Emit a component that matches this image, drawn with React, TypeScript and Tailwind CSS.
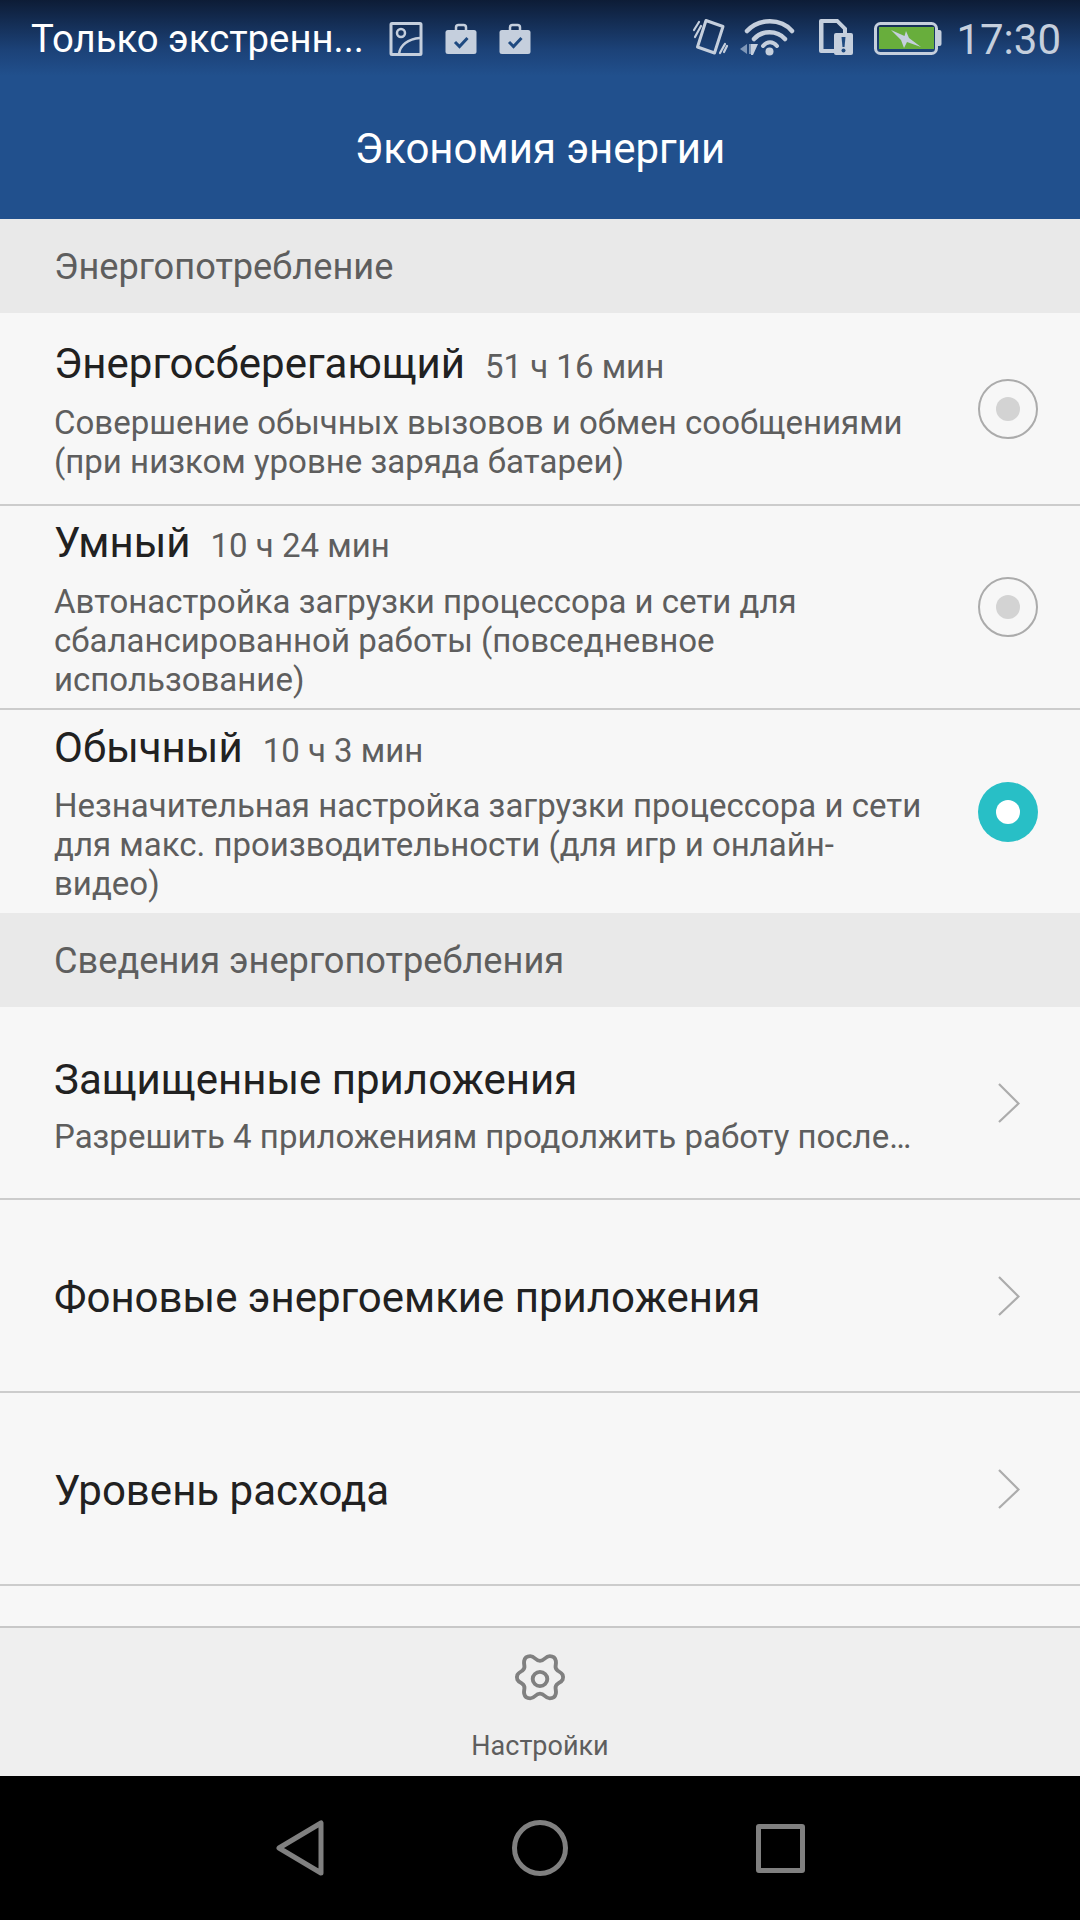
const font = { fontFamily: 'Roboto, "Noto Sans", sans-serif' };

function ImageIcon() {
  return (
    <svg width="34" height="36" viewBox="0 0 34 36" fill="none" stroke="#c5cfdd" strokeWidth="3">
      <rect x="2" y="2.5" width="30" height="31" rx="1" />
      <circle cx="12" cy="12" r="4" strokeWidth="2.5" />
      <path d="M10 33c1-9 9-15 21-16" strokeWidth="2.5" />
    </svg>
  );
}

function BriefcaseIcon() {
  return (
    <svg width="32" height="32" viewBox="0 0 32 32">
      <path d="M11 7V4.500C11 3 12 2 13.500 2h5C20 2 21 3 21 4.500V7" fill="none" stroke="#c5cfdd" strokeWidth="2.500" />
      <rect x="0.500" y="7" width="31" height="24" rx="2.500" fill="#c5cfdd" />
      <path d="M10 19l4.500 4.500L22.500 15" fill="none" stroke="#1f4a80" strokeWidth="3" />
    </svg>
  );
}

function VibrateIcon() {
  return (
    <svg width="38" height="42" viewBox="2 8 38 42" fill="none" stroke="#c5cfdd">
      <path d="M17 10.500L34 16.500L25.500 43L8.500 37z" strokeWidth="3" strokeLinejoin="round" />
      <path d="M5 20L10 12M6 27L12 16M31 43L36 34M35 42L38 36" strokeWidth="2.200" strokeLinecap="round" />
    </svg>
  );
}

function WifiIcon() {
  return (
    <svg width="58" height="42" viewBox="50 8 58 42" fill="none" stroke="#c5cfdd" strokeLinecap="round">
      <path d="M58 21C70 8 92 8 103 21" strokeWidth="4.500" />
      <path d="M65 29C73 20 88 20 96 29" strokeWidth="4.500" />
      <path d="M74 36C78 31 84 31 88 36" strokeWidth="4" />
      <circle cx="80.500" cy="41.500" r="4" fill="#c5cfdd" stroke="none" />
      <path d="M51 39l7-5v10z" fill="#7f97b8" stroke="none" />
      <path d="M60 34h2.500v10H60z" fill="#7f97b8" stroke="none" />
      <path d="M62 34h7l-5 11h-2z" fill="#c5cfdd" stroke="none" />
    </svg>
  );
}

function SimAlertIcon() {
  return (
    <svg width="38" height="42" viewBox="3 8 38 42">
      <path d="M5 11Q5 9 7 9H24L33 18V23H29V19.500L22.500 13H9.500V39H20V43H7Q5 43 5 41z" fill="#c5cfdd" />
      <rect x="20" y="23" width="19" height="22" rx="2" fill="#c5cfdd" />
      <path d="M27.500 27H31.500L30.500 37H28.500z" fill="#1f4a80" />
      <circle cx="29.500" cy="40.500" r="2" fill="#1f4a80" />
    </svg>
  );
}

function BatteryIcon() {
  return (
    <svg width="72" height="42" viewBox="58 8 72 42">
      <rect x="61.500" y="13.500" width="61" height="30" rx="5" fill="none" stroke="#c5cfdd" strokeWidth="3" />
      <rect x="65" y="17" width="55" height="22" fill="#68ae3c" />
      <path d="M124 20h1.500a2 2 0 0 1 2 2v12a2 2 0 0 1-2 2H124z" fill="#c5cfdd" />
      <path d="M77 20L90.500 26L92 21L95 28L107 37L93 32L90 38L87 30z" fill="#c5cfdd" />
    </svg>
  );
}

function SettingsIcon() {
  return (
    <svg width="56" height="54" viewBox="0 0 46 46" preserveAspectRatio="none" fill="none" stroke="#808080" strokeWidth="3.200" strokeLinejoin="round">
      <path d="M15 3.500c2 0 3 1 4 2s2.500 2 4 2 3-1 4-2 2-2 4-2c2.500 0 4.500 1.500 5 4 .3 2 0 3-.2 4.500-.2 1.500.5 3 1.800 4 1.500 1 3 1.500 4 3.500.6 1.500.6 2.500 0 4-1 2-2.500 2.500-4 3.500-1.300 1-2 2.500-1.800 4 .2 1.500.5 2.500.2 4.500-.5 2.500-2.500 4-5 4-2 0-3-1-4-2s-2.500-2-4-2-3 1-4 2-2 2-4 2c-2.500 0-4.500-1.500-5-4-.3-2 0-3 .2-4.500.2-1.500-.5-3-1.800-4-1.500-1-3-1.500-4-3.500-.6-1.500-.6-2.500 0-4 1-2 2.500-2.500 4-3.500 1.300-1 2-2.500 1.800-4-.2-1.500-.5-2.500-.2-4.500.5-2.500 2.500-4 5-4z" />
      <circle cx="23" cy="23" r="6" />
    </svg>
  );
}

function BackIcon() {
  return (
    <svg width="48" height="56" viewBox="0 0 48 56" fill="none" stroke="#808080" strokeWidth="5" strokeLinejoin="round">
      <path d="M3 28L45 3v50z" />
    </svg>
  );
}

function Chevron() {
  return (
    <svg width="22" height="40" viewBox="0 0 22 40" fill="none" stroke="#acacac" strokeWidth="2.200" className="shrink-0">
      <path d="M1 1l19.500 19.500L1 39" />
    </svg>
  );
}

function Radio({ active }: { active?: boolean }) {
  if (active) {
    return (
      <div className="flex h-[60px] w-[60px] shrink-0 items-center justify-center rounded-full bg-[#28bfc6]">
        <div className="h-6 w-6 rounded-full bg-white" />
      </div>
    );
  }
  return (
    <div className="flex h-[60px] w-[60px] shrink-0 items-center justify-center rounded-full border-2 border-[#ababab]">
      <div className="h-6 w-6 rounded-full bg-[#d3d3d3]" />
    </div>
  );
}

function SectionHeader({ title }: { title: string }) {
  return (
    <div className="flex h-[94px] items-center bg-[#e9e9e9] pl-[54px] pt-[2px] text-[36.2px] text-[#5e5e5e]">
      {title}
    </div>
  );
}

const modes = [
  {
    name: 'Энергосберегающий',
    time: '51 ч 16 мин',
    lines: ['Совершение обычных вызовов и обмен сообщениями', '(при низком уровне заряда батареи)'],
    height: 'h-[193px]',
    border: true,
  },
  {
    name: 'Умный',
    time: '10 ч 24 мин',
    lines: ['Автонастройка загрузки процессора и сети для', 'сбалансированной работы (повседневное', 'использование)'],
    height: 'h-[204px]',
    border: true,
  },
  {
    name: 'Обычный',
    time: '10 ч 3 мин',
    lines: ['Незначительная настройка загрузки процессора и сети', 'для макс. производительности (для игр и онлайн-', 'видео)'],
    height: 'h-[203px]',
    border: false,
    active: true,
  },
];

function LinkRow({ title, subtitle }: { title: string; subtitle?: string }) {
  return (
    <div className="flex h-[193px] items-center justify-between border-b-2 border-[#cccccc] pl-[54px] pr-[60px]">
      <div className={`min-w-0 ${subtitle ? 'pt-[6px]' : 'pt-[4px]'}`}>
        <div className="text-[42px] leading-[48px] text-[#212121]">{title}</div>
        {subtitle && (
          <div className="mt-[13px] text-[33px] leading-[39px] text-[#5e5e5e]">{subtitle}</div>
        )}
      </div>
      <Chevron />
    </div>
  );
}

export default function App() {
  return (
    <div className="flex h-[1920px] w-[1080px] flex-col overflow-hidden bg-[#f7f7f7]" style={font}>
      {/* ヘッダー */}
      <div className="h-[219px] bg-[linear-gradient(to_bottom,#0d1c36_0px,#1c4278_50px,#21508d_76px,#21508d_100%)]">
        <div className="flex h-[78px] items-center pl-[31px] pr-[19px]">
          <span className="text-[38.3px] text-white">Только экстренн...</span>
          <div className="ml-[25px] flex items-center gap-[22px]">
            <ImageIcon />
            <BriefcaseIcon />
            <BriefcaseIcon />
          </div>
          <div className="ml-auto flex items-center">
            <VibrateIcon />
            <div className="ml-[10px]"><WifiIcon /></div>
            <div className="ml-[20px]"><SimAlertIcon /></div>
            <div className="ml-[17px]"><BatteryIcon /></div>
            <span className="ml-[12px] text-[42px] text-[#c5cfdd]">17:30</span>
          </div>
        </div>
        <div className="flex h-[141px] items-center justify-center text-[42px] text-white">
          Экономия энергии
        </div>
      </div>

      {/* リスト */}
      <div className="min-h-0 flex-1">
        <SectionHeader title="Энергопотребление" />
        {modes.map((m) => (
          <div
            key={m.name}
            className={`flex ${m.height} items-center justify-between pl-[54px] pr-[42px] ${m.border ? 'border-b-2 border-[#cccccc]' : ''}`}
          >
            <div className="pt-[4px]">
              <div className="flex items-baseline gap-[20px]">
                <span className="text-[42px] leading-[48px] text-[#212121]">{m.name}</span>
                <span className="text-[33px] text-[#5e5e5e]">{m.time}</span>
              </div>
              <div className="mt-[11px] text-[33px] leading-[39px] text-[#5e5e5e]">
                {m.lines.map((line) => (
                  <div key={line}>{line}</div>
                ))}
              </div>
            </div>
            <Radio active={m.active} />
          </div>
        ))}
        <SectionHeader title="Сведения энергопотребления" />
        <LinkRow title="Защищенные приложения" subtitle="Разрешить 4 приложениям продолжить работу после…" />
        <LinkRow title="Фоновые энергоемкие приложения" />
        <LinkRow title="Уровень расхода" />
      </div>

      {/* 下部バー */}
      <div className="flex h-[150px] flex-col items-center border-t-2 border-[#c8c8c8] bg-[#efefef] pt-[24px]">
        <SettingsIcon />
        <span className="mt-[25px] text-[27px] leading-[30px] text-[#5e5e5e]">Настройки</span>
      </div>

      {/* ナビゲーションバー */}
      <div className="flex h-[144px] items-center justify-center gap-[188px] bg-black">
        <BackIcon />
        <div className="h-[56px] w-[56px] rounded-full border-[5px] border-[#808080]" />
        <div className="h-[49px] w-[49px] rounded-[3px] border-[5px] border-[#808080]" />
      </div>
    </div>
  );
}
